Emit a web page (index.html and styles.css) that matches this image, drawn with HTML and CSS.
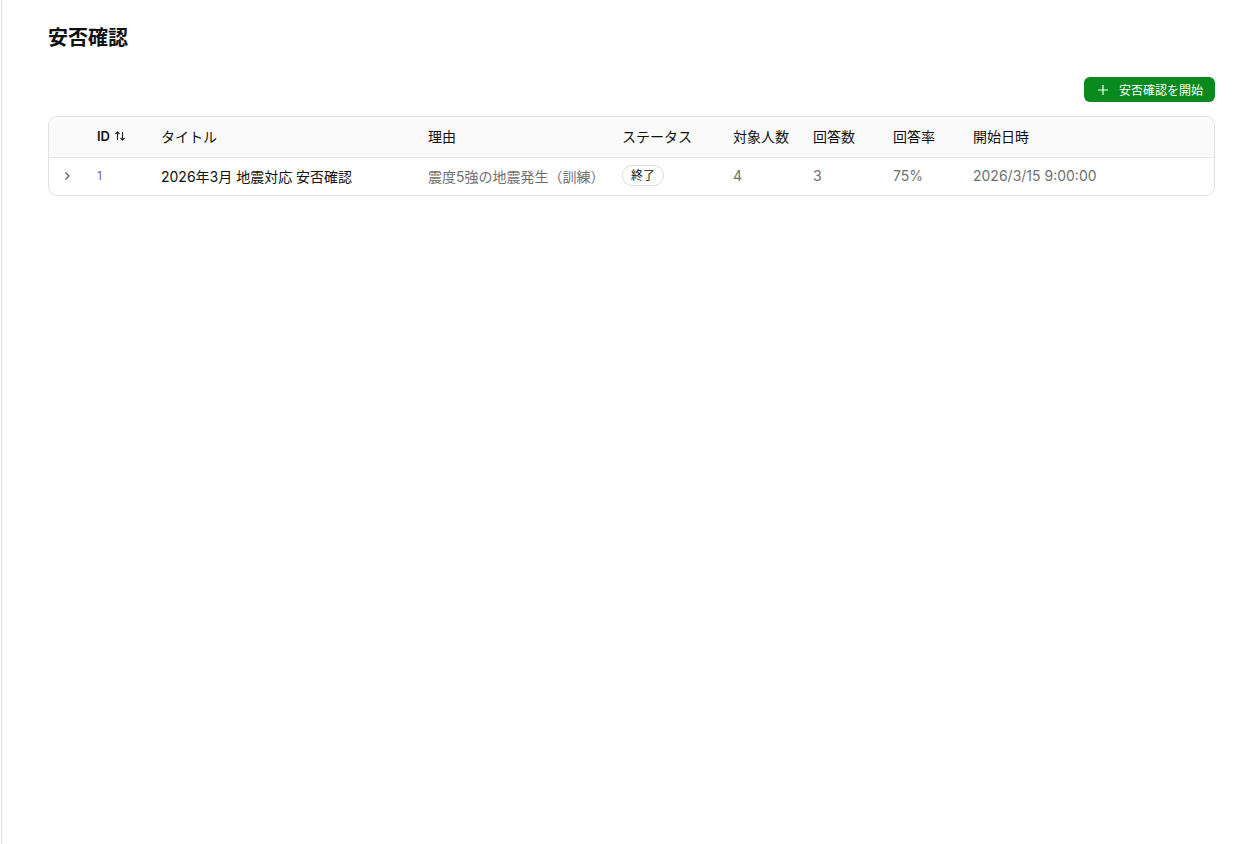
FILE: index.html
```html
<!DOCTYPE html>
<html lang="ja">
<head>
<meta charset="utf-8">
<title>安否確認</title>
<link rel="stylesheet" href="styles.css">
</head>
<body>
<div class="page">
  <h1 class="title">安否確認</h1>

  <div class="toolbar">
    <button class="btn-primary">
      <svg width="12" height="12" viewBox="0 0 12 12"><path d="M6 1v10M1 6h10" stroke="#fff" stroke-width="1.2" fill="none"/></svg>
      安否確認を開始
    </button>
  </div>

  <div class="table-wrap">
    <table class="list">
      <colgroup>
        <col style="width:48px"><col style="width:64px"><col style="width:267px"><col style="width:194px">
        <col style="width:111px"><col style="width:80px"><col style="width:80px"><col style="width:80px"><col>
      </colgroup>
      <thead>
        <tr>
          <th></th>
          <th class="sortable">ID
            <svg width="12" height="12" viewBox="0 0 12 12"><path d="M3.5 10V2M1.5 4l2-2 2 2M8.5 2v8M6.5 8l2 2 2-2" stroke="#222" stroke-width="1.1" fill="none"/></svg>
          </th>
          <th>タイトル</th>
          <th>理由</th>
          <th>ステータス</th>
          <th>対象人数</th>
          <th>回答数</th>
          <th>回答率</th>
          <th>開始日時</th>
        </tr>
      </thead>
      <tbody>
        <tr>
          <td class="expand"><svg width="10" height="10" viewBox="0 0 10 10"><path d="M3.5 1.5L7 5 3.5 8.5" stroke="#555" stroke-width="1.1" fill="none"/></svg></td>
          <td class="muted small">1</td>
          <td class="strong">2026年3月 地震対応 安否確認</td>
          <td class="muted">震度5強の地震発生（訓練）</td>
          <td><span class="badge">終了</span></td>
          <td class="muted">4</td>
          <td class="muted">3</td>
          <td class="muted">75%</td>
          <td class="muted">2026/3/15 9:00:00</td>
        </tr>
      </tbody>
    </table>
  </div>
</div>
</body>
</html>
```

FILE: styles.css
```css
html, body {
	margin: 0;
	height: 100%;
	background: #fff;
}
body {
	font-family: Inter, "Noto Sans CJK JP", sans-serif;
	color: #111;
}
.page {
	margin-left: 1px;
	min-height: 100%;
	box-sizing: border-box;
	border-left: 1px solid #e3e3e3;
	padding: 24px 25px 0 46px;
}
.title {
	margin: 0;
	font-size: 20px;
	font-weight: 700;
	line-height: 28px;
}
.toolbar {
	display: flex;
	justify-content: flex-end;
	margin-top: 25px;
}
.btn-primary {
	display: flex;
	align-items: center;
	gap: 10px;
	height: 25px;
	padding: 0 12px 0 13px;
	border: none;
	border-radius: 6px;
	background: #088a1e;
	color: #fff;
	font-family: Inter, "Noto Sans CJK JP", sans-serif;
	font-size: 12px;
}
.table-wrap {
	margin-top: 14px;
	border: 1px solid #e2e2e2;
	border-radius: 9px;
	overflow: hidden;
}
.list {
	width: 100%;
	border-collapse: collapse;
	table-layout: fixed;
	font-size: 14px;
}
.list th {
	height: 38px;
	background: #fafafa;
	border-bottom: 1px solid #e6e6e6;
	text-align: left;
	font-weight: 400;
	padding: 0 0 2px;
	white-space: nowrap;
}
.list th.sortable {
	font-weight: 600;
	font-size: 13px;
}
.list th.sortable svg {
	vertical-align: -1px;
	margin-left: 1px;
}
.list td {
	height: 35px;
	padding: 0 0 2px;
	white-space: nowrap;
}
.list td.expand {
	padding-left: 13px;
}
.list td.expand svg {
	display: block;
}
.muted {
	color: #707070;
}
.small {
	font-size: 12px;
}
.strong {
	color: #111;
	font-weight: 400;
}
.badge {
	display: inline-block;
	padding: 0 8px;
	line-height: 19px;
	border: 1px solid #dcdcdc;
	border-radius: 10px;
	font-size: 12px;
	color: #111;
}
```
